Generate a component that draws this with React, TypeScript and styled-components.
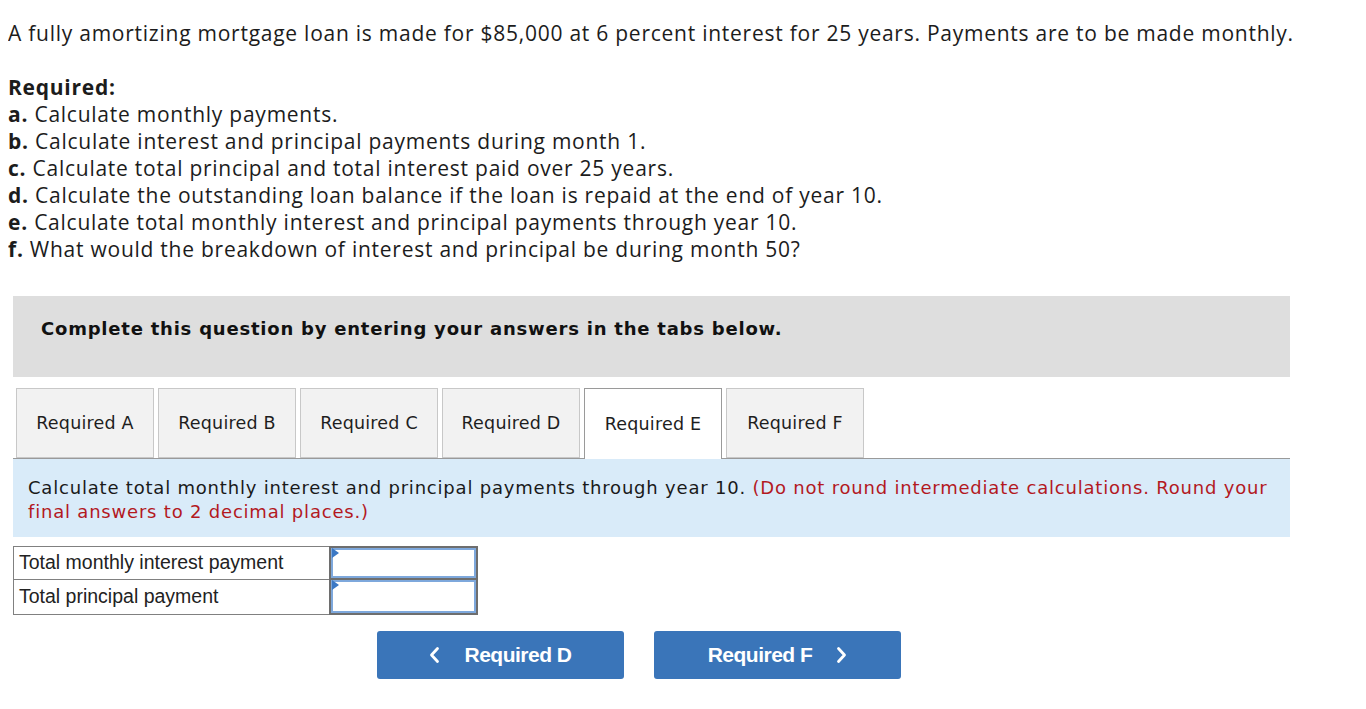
import React from "react";
import styled, { createGlobalStyle } from "styled-components";

const Global = createGlobalStyle`
  body {
    margin: 8px;
    background: #ffffff;
    font-family: "Open Sans", Lato, sans-serif;
    color: #1c1c1c;
  }
`;

const Intro = styled.p`
  margin: 12px 0 0 0;
  font-size: 21px;
  line-height: 27px;
  letter-spacing: 0.75px;
`;

const Required = styled.div`
  margin-top: 27px;
  font-size: 21px;
  line-height: 27px;
  letter-spacing: 0.75px;
`;

const RequiredTitle = styled.div`
  font-weight: 700;
`;

const Item = styled.div``;

const Letter = styled.b`
  font-weight: 700;
`;

const Panel = styled.div`
  margin: 33px 0 0 5px;
  width: 1277px;
  font-family: "DejaVu Sans", Verdana, sans-serif;
`;

const Banner = styled.div`
  background: #dedede;
  height: 81px;
  padding: 22px 0 0 28px;
  box-sizing: border-box;
  font-weight: 700;
  font-size: 18px;
  line-height: 22px;
  letter-spacing: 0.78px;
  color: #111;
`;

const Tabs = styled.div`
  display: flex;
  align-items: flex-start;
  gap: 4px;
  margin-top: 11px;
  padding-left: 3px;
`;

const Tab = styled.div<{ $active?: boolean }>`
  width: 138px;
  height: ${(p) => (p.$active ? "71px" : "70px")};
  margin-bottom: ${(p) => (p.$active ? "-1px" : "0")};
  box-sizing: border-box;
  display: flex;
  align-items: center;
  justify-content: center;
  padding-bottom: ${(p) => (p.$active ? "1px" : "0")};
  font-size: 17.5px;
  letter-spacing: 0.2px;
  color: #1e1e1e;
  background: ${(p) => (p.$active ? "#ffffff" : "#f2f2f2")};
  border: 1px solid ${(p) => (p.$active ? "#9a9a9a" : "#c8c8c8")};
  border-bottom: ${(p) => (p.$active ? "none" : "1px solid #c8c8c8")};
  position: relative;
  z-index: ${(p) => (p.$active ? 1 : 0)};
`;

const Info = styled.div`
  background: #d9ebf9;
  border-top: 1px solid #9a9a9a;
  padding: 17px 6px 13px 15px;
  font-size: 18px;
  line-height: 24px;
  letter-spacing: 0.8px;
  color: #1a1a1a;
`;

const Red = styled.span`
  color: #b3191f;
`;

const Table = styled.div`
  margin-top: 9px;
  display: grid;
  grid-template-columns: 316px 149px;
  grid-template-rows: 34px 35px;
  width: 465px;
  font-family: "Liberation Sans", Arial, sans-serif;
`;

const Label = styled.div<{ $second?: boolean }>`
  box-sizing: border-box;
  display: flex;
  align-items: center;
  padding: 0 0 1px 5px;
  font-size: 19.5px;
  color: #222;
  border: 1px solid #808080;
  border-right: none;
  border-top: ${(p) => (p.$second ? "none" : "1px solid #808080")};
`;

const Cell = styled.div<{ $second?: boolean }>`
  box-sizing: border-box;
  border: 2px solid #6e6e6e;
  border-top: ${(p) => (p.$second ? "none" : "2px solid #6e6e6e")};
  position: relative;
  background: #fff;
`;

const Input = styled.div`
  position: absolute;
  inset: 0;
  border: 2px solid #7ea8dc;
  background: #fff;
`;

const Flag = styled.div`
  position: absolute;
  left: 1px;
  top: 0;
  width: 0;
  height: 0;
  border-top: 5px solid transparent;
  border-bottom: 5px solid transparent;
  border-left: 7px solid #3b78c4;
`;

const Buttons = styled.div`
  display: flex;
  gap: 30px;
  margin-top: 16px;
  padding-left: 364px;
`;

const NavButton = styled.div`
  width: 247px;
  height: 48px;
  border-radius: 3px;
  background: #3a75b9;
  color: #fff;
  display: flex;
  align-items: center;
  justify-content: center;
  gap: 24px;
  font-family: "Liberation Sans", Arial, sans-serif;
  font-weight: 700;
  font-size: 21px;
  letter-spacing: -0.5px;
`;

const Chevron = ({ dir }: { dir: "left" | "right" }) => (
  <svg width="11" height="18" viewBox="0 0 11 18">
    <path
      d={dir === "left" ? "M8.5 2.5 L2.5 9 L8.5 15.5" : "M2.5 2.5 L8.5 9 L2.5 15.5"}
      fill="none"
      stroke="#fff"
      strokeWidth="2.8"
      strokeLinecap="round"
      strokeLinejoin="round"
    />
  </svg>
);

const items: [string, string][] = [
  ["a.", "Calculate monthly payments."],
  ["b.", "Calculate interest and principal payments during month 1."],
  ["c.", "Calculate total principal and total interest paid over 25 years."],
  ["d.", "Calculate the outstanding loan balance if the loan is repaid at the end of year 10."],
  ["e.", "Calculate total monthly interest and principal payments through year 10."],
  ["f.", "What would the breakdown of interest and principal be during month 50?"],
];

const tabs = ["A", "B", "C", "D", "E", "F"];

export default function App() {
  return (
    <>
      <Global />
      <Intro>
        A fully amortizing mortgage loan is made for $85,000 at 6 percent interest for 25 years. Payments are to be made monthly.
      </Intro>
      <Required>
        <RequiredTitle>Required:</RequiredTitle>
        {items.map(([l, t]) => (
          <Item key={l}>
            <Letter>{l}</Letter> {t}
          </Item>
        ))}
      </Required>
      <Panel>
        <Banner>Complete this question by entering your answers in the tabs below.</Banner>
        <Tabs>
          {tabs.map((t) => (
            <Tab key={t} $active={t === "E"}>
              Required {t}
            </Tab>
          ))}
        </Tabs>
        <Info>
          Calculate total monthly interest and principal payments through year 10.{" "}
          <Red>(Do not round intermediate calculations. Round your final answers to 2 decimal places.)</Red>
        </Info>
        <Table>
          <Label>Total monthly interest payment</Label>
          <Cell>
            <Input />
            <Flag />
          </Cell>
          <Label $second>Total principal payment</Label>
          <Cell $second>
            <Input />
            <Flag />
          </Cell>
        </Table>
        <Buttons>
          <NavButton>
            <Chevron dir="left" />
            Required D
          </NavButton>
          <NavButton>
            Required F
            <Chevron dir="right" />
          </NavButton>
        </Buttons>
      </Panel>
    </>
  );
}
